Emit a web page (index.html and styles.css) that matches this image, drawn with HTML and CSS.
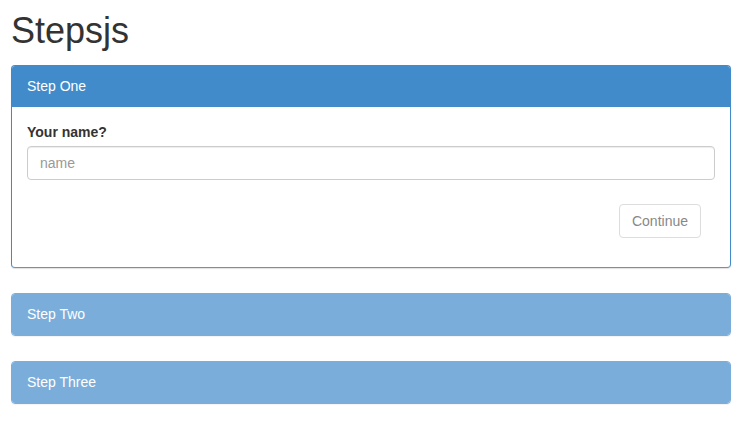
FILE: index.html
```html
<!DOCTYPE html>
<html>
<head>
<meta charset="utf-8">
<title>Stepsjs</title>
<link rel="stylesheet" href="styles.css">
</head>
<body>
<div class="container">
  <h1 class="title">Stepsjs</h1>
  <div class="panel active">
    <div class="panel-heading">Step One</div>
    <div class="panel-body">
      <label class="label" for="name">Your name?</label>
      <input class="input" id="name" type="text" placeholder="name">
      <div class="actions">
        <button class="btn" type="button">Continue</button>
      </div>
    </div>
  </div>
  <div class="panel inactive">
    <div class="panel-heading">Step Two</div>
  </div>
  <div class="panel inactive">
    <div class="panel-heading">Step Three</div>
  </div>
</div>
</body>
</html>
```
FILE: styles.css
```css
html, body {
  margin: 0;
  padding: 0;
  background: #fff;
}
body {
  font-family: "Liberation Sans", Arial, sans-serif;
  font-size: 14px;
  line-height: 20px;
  color: #333;
}
.container {
  padding: 0 11px;
}
.title {
  font-size: 36px;
  font-weight: 500;
  line-height: 40px;
  margin: 11px 0 14px;
}
.panel {
  border: 1px solid #428bca;
  border-radius: 4px;
  box-shadow: 0 1px 1px rgba(0,0,0,0.05);
  margin-bottom: 25px;
  overflow: hidden;
}
.panel-heading {
  background: #428bca;
  color: #fff;
  padding: 10px 15px;
  border-bottom: 1px solid #428bca;
}
.panel.active {
  border-bottom-color: #7390b0;
  box-shadow: 0 1px 1px rgba(0,0,0,0.12);
}
.panel.inactive {
  border-color: #7badda;
}
.panel.inactive .panel-heading {
  background: #7badda;
  border-bottom: 0;
  padding: 10px 15px 11px;
}
.panel-body {
  padding: 15px 15px 14px;
  display: flex;
  flex-direction: column;
}
.label {
  font-weight: bold;
  margin-bottom: 4px;
}
.input {
  height: 34px;
  box-sizing: border-box;
  padding: 6px 12px;
  font-family: inherit;
  font-size: 14px;
  color: #555;
  border: 1px solid #ccc;
  border-radius: 4px;
  box-shadow: inset 0 1px 1px rgba(0,0,0,0.075);
  outline: none;
}
.input::placeholder {
  color: #999;
}
.actions {
  display: flex;
  justify-content: flex-end;
  padding: 24px 14px 0 0;
  margin-bottom: 15px;
}
.btn {
  height: 34px;
  box-sizing: border-box;
  padding: 6px 12px;
  font-family: inherit;
  font-size: 14px;
  color: #888;
  background: #fff;
  border: 1px solid #ddd;
  border-radius: 4px;
}
```
